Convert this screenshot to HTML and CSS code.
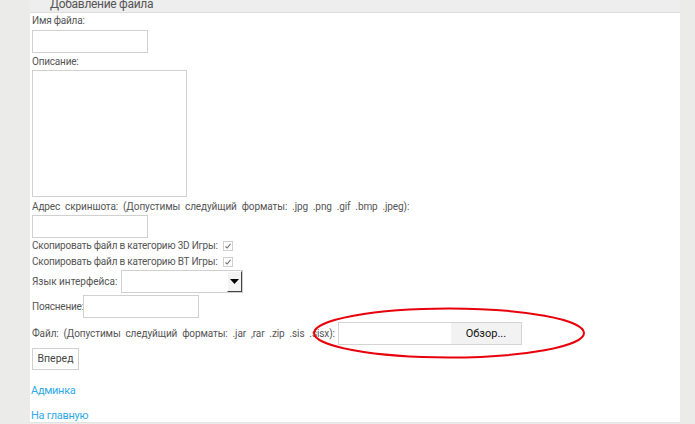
FILE: index.html
```html
<!DOCTYPE html>
<html lang="ru">
<head>
<meta charset="utf-8">
<title>Добавление файла</title>
<link rel="stylesheet" href="styles.css">
</head>
<body>
<div class="page">
  <div class="gutter"></div>
  <main class="main">
    <div class="header"><div class="header-title">Добавление файла</div></div>
    <form class="form">
      <div class="label l1">Имя файла:</div>
      <div class="field f1"></div>
      <div class="label l2">Описание:</div>
      <div class="area"></div>
      <div class="label l3 wide">Адрес скриншота: (Допустимы следуйщий форматы: .jpg .png .gif .bmp .jpeg):</div>
      <div class="field f3"></div>
      <div class="row r-check1"><span class="label">Скопировать файл в категорию 3D Игры:</span><span class="check"><svg width="8" height="8" viewBox="0 0 8 8"><path d="M1.5 4.5 L3.2 6 L6.5 1.8" fill="none" stroke="#777" stroke-width="1.2"/></svg></span></div>
      <div class="row r-check2"><span class="label">Скопировать файл в категорию BT Игры:</span><span class="check"><svg width="8" height="8" viewBox="0 0 8 8"><path d="M1.5 4.5 L3.2 6 L6.5 1.8" fill="none" stroke="#777" stroke-width="1.2"/></svg></span></div>
      <div class="row r-select"><span class="label lang">Язык интерфейса:</span><span class="select"><span class="select-btn"><svg width="9" height="5" viewBox="0 0 9 5"><path d="M0 0 H9 L4.5 5 Z" fill="#000"/></svg></span></span></div>
      <div class="row r-note"><span class="label">Пояснение:</span><span class="field"></span></div>
      <div class="row r-file"><span class="label wide">Файл: (Допустимы следуйщий форматы: .jar ,rar .zip .sis .sisx):</span><span class="file"><span class="file-path"></span><span class="file-btn">Обзор...</span></span></div>
      <div class="submit">Вперед</div>
      <a class="link l-admin" href="#">Админка</a>
      <a class="link l-home" href="#">На главную</a>
    </form>
    <svg class="mark" width="280" height="58" viewBox="0 0 280 58"><ellipse cx="137" cy="28" rx="135" ry="24.5" fill="none" stroke="#e8000b" stroke-width="2"/></svg>
  </main>
  <div class="side"></div>
</div>
</body>
</html>
```
FILE: styles.css
```css
html, body {
  margin: 0;
  padding: 0;
  background: #ebecea;
  font-family: Roboto, "Noto Sans", "DejaVu Sans", sans-serif;
}
.page {
  display: flex;
  height: 424px;
  overflow: hidden;
}
.gutter {
  width: 30px;
  flex: none;
}
.main {
  position: relative;
  width: 650px;
  flex: none;
  background: #fff;
  height: 422px;
  border-bottom: 1px solid #e4e4e4;
}
.side {
  flex: 1;
}
.header {
  height: 12px;
  background: #eeeeee;
  border-bottom: 1px solid #dcdcdc;
  overflow: hidden;
}
.header-title {
  margin-top: -5px;
  padding-left: 20px;
  font-size: 12px;
  letter-spacing: -0.3px;
  line-height: 18px;
  color: #555;
}
.form {
  display: flex;
  flex-direction: column;
  align-items: flex-start;
  padding-left: 2px;
}
.label {
  font-size: 10px;
  letter-spacing: -0.2px;
  line-height: 14px;
  color: #555;
  white-space: nowrap;
}
.wide {
  letter-spacing: -0.1px;
  word-spacing: 2.5px;
}
.lang {
  letter-spacing: 0;
}
.field {
  box-sizing: border-box;
  width: 116px;
  height: 23px;
  border: 1px solid #d0d0d0;
  background: #fff;
}
.l1 { margin-top: 1px; }
.f1 { margin-top: 2px; }
.l2 { margin-top: 2px; }
.area {
  box-sizing: border-box;
  margin-top: 1px;
  width: 155px;
  height: 127px;
  border: 1px solid #d0d0d0;
}
.l3 { margin-top: 3px; }
.f3 { margin-top: 1px; }
.row {
  display: flex;
  align-items: center;
}
.r-check1 { margin-top: 1px; height: 14px; }
.r-check2 { margin-top: 2px; height: 14px; }
.check {
  box-sizing: border-box;
  width: 10px;
  height: 10px;
  margin-left: 5px;
  border: 1px solid #cfcfcf;
  background: #fff;
  display: flex;
  align-items: center;
  justify-content: center;
}
.r-select { margin-top: 1px; }
.select {
  box-sizing: border-box;
  margin-left: 4px;
  width: 122px;
  height: 23px;
  border: 1px solid #cfcfcf;
  display: flex;
  justify-content: flex-end;
  background: #fff;
}
.select-btn {
  box-sizing: border-box;
  width: 15px;
  height: 21px;
  background: #f4f4f4;
  border-left: 1px solid #fff;
  border-top: 1px solid #fff;
  border-right: 1px solid #444;
  border-bottom: 1px solid #444;
  display: flex;
  align-items: center;
  justify-content: center;
}
.r-note { margin-top: 2px; }
.r-note .field { margin-left: -1px; }
.r-file { margin-top: 4px; }
.file {
  display: flex;
  box-sizing: border-box;
  margin-left: 3px;
  width: 184px;
  height: 23px;
  border: 1px solid #d4d4d4;
}
.file-path {
  flex: 1;
  background: #fff;
}
.file-btn {
  width: 70px;
  background: #f2f2f2;
  font-size: 11px;
  line-height: 21px;
  color: #111;
  text-align: center;
}
.submit {
  box-sizing: border-box;
  margin-top: 3px;
  width: 47px;
  height: 22px;
  border: 1px solid #d0d0d0;
  background: #fff;
  font-size: 10.5px;
  line-height: 20px;
  text-align: center;
  color: #444;
}
.link {
  margin-left: -1px;
  font-size: 11px;
  letter-spacing: -0.3px;
  line-height: 14px;
  color: #2fa9e6;
  text-decoration: none;
}
.l-admin { margin-top: 14px; }
.l-home { margin-top: 11px; }
.mark {
  position: absolute;
  left: 282px;
  top: 305px;
}
```
